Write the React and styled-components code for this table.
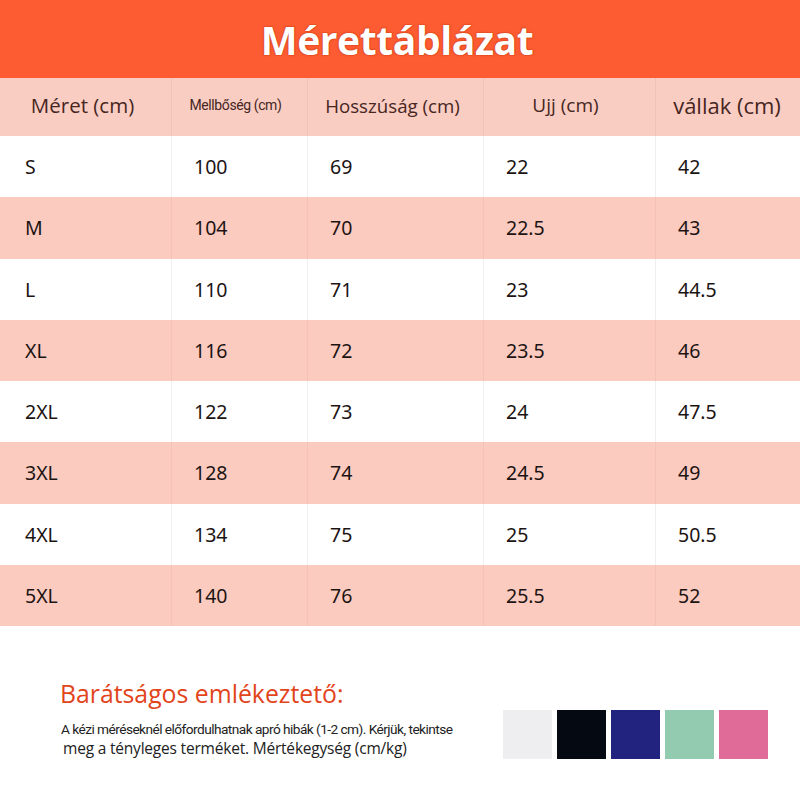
import React from "react";
import styled, { createGlobalStyle } from "styled-components";

const Global = createGlobalStyle`
  html, body { margin: 0; padding: 0; background: #ffffff; }
  body { font-family: "Open Sans", "Noto Sans", sans-serif; }
`;

const Page = styled.div`
  width: 800px;
  height: 800px;
  background: #ffffff;
  display: flex;
  flex-direction: column;
`;

const Banner = styled.header`
  height: 78px;
  background: #fd5b31;
  display: flex;
  align-items: center;
  justify-content: center;
`;

const Title = styled.h1`
  margin: 0;
  font-family: "Open Sans", sans-serif;
  font-weight: 700;
  font-size: 39px;
  letter-spacing: -0.4px;
  color: #ffffff;
  text-shadow: 0 0 2px #c2360e, 0 0 1px #c2360e;
  transform: translateX(-3px);
`;

const Table = styled.div`
  display: grid;
  grid-template-columns: 171px 136px 176px 172px 145px;
`;

const HeadCell = styled.div`
  height: 58px;
  background: #facdc2;
  display: flex;
  align-items: center;
  justify-content: center;
  color: #46261f;
  font-family: ${(p) => (p.$narrow ? '"Roboto", sans-serif' : '"Open Sans", sans-serif')};
  font-size: ${(p) => p.$size}px;
  letter-spacing: ${(p) => (p.$narrow ? "-0.4px" : "0")};
  border-left: ${(p) => (p.$first ? "none" : "1px solid #f2c2b7")};
  box-sizing: border-box;
  padding-bottom: 4px;
  padding-right: ${(p) => p.$shift}px;
`;

const Cell = styled.div`
  height: 61.25px;
  background: ${(p) => (p.$pink ? "#fccbc0" : "#ffffff")};
  display: flex;
  align-items: center;
  padding-left: ${(p) => (p.$first ? "25px" : "22px")};
  box-sizing: border-box;
  color: #1c1412;
  font-family: "Noto Sans", "Open Sans", sans-serif;
  font-size: 19.5px;
  border-left: ${(p) =>
    p.$first ? "none" : p.$pink ? "1px solid #f4c2b7" : "1px solid #f1eeee"};
`;

const Footer = styled.div`
  flex: 1;
  display: flex;
  align-items: flex-start;
  padding: 51px 0 0 60px;
`;

const Note = styled.div`
  width: 443px;
  display: flex;
  flex-direction: column;
`;

const NoteTitle = styled.div`
  font-family: "Open Sans", sans-serif;
  font-size: 24.8px;
  color: #e2441b;
  line-height: 32px;
  margin-bottom: 11px;
`;

const NoteLine = styled.div`
  font-family: ${(p) => (p.$condensed ? '"Roboto", sans-serif' : '"Open Sans", sans-serif')};
  font-size: ${(p) => (p.$condensed ? "13.7px" : "15.5px")};
  letter-spacing: ${(p) => (p.$condensed ? "-0.55px" : "-0.2px")};
  color: #222222;
  line-height: 19px;
  padding-left: ${(p) => (p.$condensed ? "1px" : "3px")};
  white-space: nowrap;
`;

const Swatches = styled.div`
  display: flex;
  gap: 5px;
  margin-top: 33px;
`;

const Swatch = styled.div`
  width: 49px;
  height: 49px;
  background: ${(p) => p.$color};
`;

const headers = [
  { label: "Méret (cm)", size: 20.5, shift: 6 },
  { label: "Mellbőség (cm)", narrow: true, size: 14, shift: 8 },
  { label: "Hosszúság (cm)", size: 18.7, shift: 6 },
  { label: "Ujj (cm)", size: 19, shift: 8 },
  { label: "vállak (cm)", size: 22, shift: 2 },
];

const rows = [
  ["S", "100", "69", "22", "42"],
  ["M", "104", "70", "22.5", "43"],
  ["L", "110", "71", "23", "44.5"],
  ["XL", "116", "72", "23.5", "46"],
  ["2XL", "122", "73", "24", "47.5"],
  ["3XL", "128", "74", "24.5", "49"],
  ["4XL", "134", "75", "25", "50.5"],
  ["5XL", "140", "76", "25.5", "52"],
];

const colors = ["#eeeef0", "#050a12", "#21237f", "#93cbb0", "#e06a98"];

export default function App() {
  return (
    <>
      <Global />
      <Page>
        <Banner>
          <Title>Mérettáblázat</Title>
        </Banner>
        <Table>
          {headers.map((h, i) => (
            <HeadCell
              key={h.label}
              $narrow={h.narrow}
              $first={i === 0}
              $size={h.size}
              $shift={h.shift}
            >
              {h.label}
            </HeadCell>
          ))}
          {rows.map((r, ri) =>
            r.map((v, ci) => (
              <Cell key={ri + "-" + ci} $pink={ri % 2 === 1} $first={ci === 0}>
                {v}
              </Cell>
            ))
          )}
        </Table>
        <Footer>
          <Note>
            <NoteTitle>Barátságos emlékeztető:</NoteTitle>
            <NoteLine $condensed>
              A kézi méréseknél előfordulhatnak apró hibák (1-2 cm). Kérjük, tekintse
            </NoteLine>
            <NoteLine>meg a tényleges terméket. Mértékegység (cm/kg)</NoteLine>
          </Note>
          <Swatches>
            {colors.map((c) => (
              <Swatch key={c} $color={c} />
            ))}
          </Swatches>
        </Footer>
      </Page>
    </>
  );
}
